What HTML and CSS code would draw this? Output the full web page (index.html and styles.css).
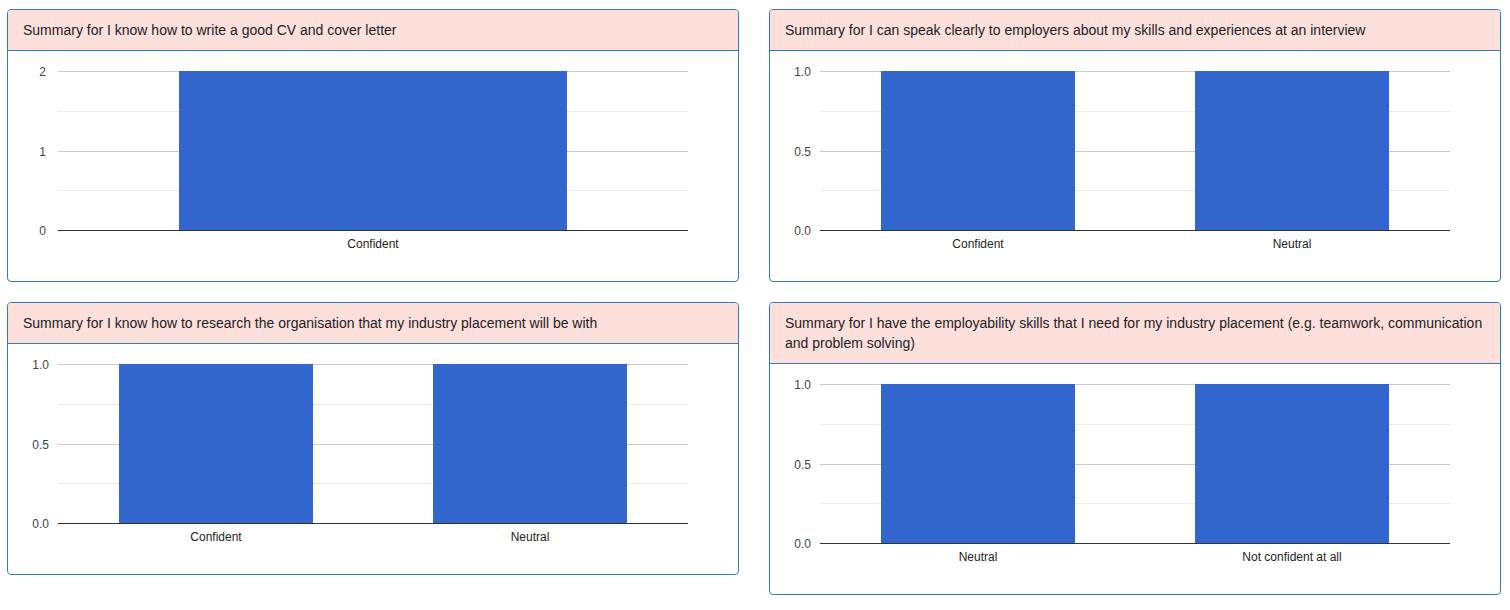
FILE: index.html
```html
<!DOCTYPE html>
<html>
<head>
<meta charset="utf-8">
<link rel="stylesheet" href="styles.css">
</head>
<body>
<div class="grid">
  <div class="card">
    <div class="card-head">Summary for I know how to write a good CV and cover letter</div>
    <div class="card-body">
      <svg class="chart" width="730" height="230" viewBox="0 0 730 230">
        <line class="minor" x1="50" x2="680" y1="60.5" y2="60.5"/>
        <line class="minor" x1="50" x2="680" y1="139.5" y2="139.5"/>
        <line class="major" x1="50" x2="680" y1="20.5" y2="20.5"/>
        <line class="major" x1="50" x2="680" y1="100.5" y2="100.5"/>
        <text class="ylab" x="38" y="25">2</text>
        <text class="ylab" x="38" y="105">1</text>
        <text class="ylab" x="38" y="184">0</text>
        <rect class="bar" x="171" y="20" width="388" height="159"/>
        <line class="base" x1="50" x2="680" y1="179.5" y2="179.5"/>
        <text class="xlab" x="365" y="197">Confident</text>
      </svg>
    </div>
  </div>
  <div class="card">
    <div class="card-head">Summary for I can speak clearly to employers about my skills and experiences at an interview</div>
    <div class="card-body">
      <svg class="chart" width="730" height="230" viewBox="0 0 730 230">
        <line class="minor" x1="50" x2="680" y1="60.5" y2="60.5"/>
        <line class="minor" x1="50" x2="680" y1="139.5" y2="139.5"/>
        <line class="major" x1="50" x2="680" y1="20.5" y2="20.5"/>
        <line class="major" x1="50" x2="680" y1="100.5" y2="100.5"/>
        <text class="ylab" x="41" y="25">1.0</text>
        <text class="ylab" x="41" y="105">0.5</text>
        <text class="ylab" x="41" y="184">0.0</text>
        <rect class="bar" x="111" y="20" width="194" height="159"/>
        <rect class="bar" x="425" y="20" width="194" height="159"/>
        <line class="base" x1="50" x2="680" y1="179.5" y2="179.5"/>
        <text class="xlab" x="208" y="197">Confident</text>
        <text class="xlab" x="522" y="197">Neutral</text>
      </svg>
    </div>
  </div>
  <div class="card">
    <div class="card-head">Summary for I know how to research the organisation that my industry placement will be with</div>
    <div class="card-body">
      <svg class="chart" width="730" height="230" viewBox="0 0 730 230">
        <line class="minor" x1="50" x2="680" y1="60.5" y2="60.5"/>
        <line class="minor" x1="50" x2="680" y1="139.5" y2="139.5"/>
        <line class="major" x1="50" x2="680" y1="20.5" y2="20.5"/>
        <line class="major" x1="50" x2="680" y1="100.5" y2="100.5"/>
        <text class="ylab" x="41" y="25">1.0</text>
        <text class="ylab" x="41" y="105">0.5</text>
        <text class="ylab" x="41" y="184">0.0</text>
        <rect class="bar" x="111" y="20" width="194" height="159"/>
        <rect class="bar" x="425" y="20" width="194" height="159"/>
        <line class="base" x1="50" x2="680" y1="179.5" y2="179.5"/>
        <text class="xlab" x="208" y="197">Confident</text>
        <text class="xlab" x="522" y="197">Neutral</text>
      </svg>
    </div>
  </div>
  <div class="card">
    <div class="card-head">Summary for I have the employability skills that I need for my industry placement (e.g. teamwork, communication and problem solving)</div>
    <div class="card-body">
      <svg class="chart" width="730" height="230" viewBox="0 0 730 230">
        <line class="minor" x1="50" x2="680" y1="60.5" y2="60.5"/>
        <line class="minor" x1="50" x2="680" y1="139.5" y2="139.5"/>
        <line class="major" x1="50" x2="680" y1="20.5" y2="20.5"/>
        <line class="major" x1="50" x2="680" y1="100.5" y2="100.5"/>
        <text class="ylab" x="41" y="25">1.0</text>
        <text class="ylab" x="41" y="105">0.5</text>
        <text class="ylab" x="41" y="184">0.0</text>
        <rect class="bar" x="111" y="20" width="194" height="159"/>
        <rect class="bar" x="425" y="20" width="194" height="159"/>
        <line class="base" x1="50" x2="680" y1="179.5" y2="179.5"/>
        <text class="xlab" x="208" y="197">Neutral</text>
        <text class="xlab" x="522" y="197">Not confident at all</text>
      </svg>
    </div>
  </div>
</div>
</body>
</html>
```
FILE: styles.css
```css
html, body {
  margin: 0;
  padding: 0;
  background: #fff;
}
body {
  font-family: "Liberation Sans", Arial, sans-serif;
  font-size: 14px;
  color: #333;
}
.grid {
  display: grid;
  grid-template-columns: 732px 732px;
  column-gap: 30px;
  row-gap: 20px;
  align-items: start;
  padding: 9px 0 0 7px;
}
.card {
  border: 1px solid #337ab7;
  border-radius: 4px;
  background: #fff;
  overflow: hidden;
}
.card-head {
  background: #fddfdc;
  border-bottom: 1px solid #337ab7;
  padding: 10px 15px;
  line-height: 20px;
  color: #222;
}
.card-body {
  height: 230px;
}
.chart {
  display: block;
}
.chart .major {
  stroke: #cccccc;
  stroke-width: 1;
}
.chart .minor {
  stroke: #ebebeb;
  stroke-width: 1;
}
.chart .base {
  stroke: #333333;
  stroke-width: 1;
}
.chart .bar {
  fill: #3366cc;
}
.chart text {
  font-family: "Liberation Sans", Arial, sans-serif;
  font-size: 12px;
}
.chart .ylab {
  fill: #444444;
  text-anchor: end;
}
.chart .xlab {
  fill: #222222;
  text-anchor: middle;
}
```
